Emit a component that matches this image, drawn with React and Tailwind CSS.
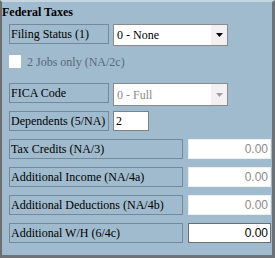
function Label({ children, wide }) {
  return (
    <div
      className={`flex h-[20px] shrink-0 items-center whitespace-nowrap border border-[#74899a] pl-[1px] text-[12px] leading-none text-black ${
        wide ? 'w-[174px]' : 'w-[100px]'
      }`}
    >
      {children}
    </div>
  )
}

function Arrow({ color }) {
  return (
    <svg width="7" height="4" viewBox="0 0 7 4">
      <path d="M0 0h7L3.5 4z" fill={color} />
    </svg>
  )
}

function FakeSelect({ value, disabled, height }) {
  return (
    <div
      className={`ml-[4px] flex w-[115px] shrink-0 border border-[#8a8a8a] bg-white ${height}`}
    >
      <div
        className={`flex flex-1 items-center pl-[3px] text-[12px] ${disabled ? 'text-[#8c8c8c]' : 'text-black'}`}
      >
        {value}
      </div>
      <div className="flex w-[16px] items-center justify-center bg-[#f3f0f3]">
        <Arrow color={disabled ? '#a0a0a0' : '#000'} />
      </div>
    </div>
  )
}

function Amount({ value, active }) {
  return (
    <div
      className={`ml-[5px] flex h-[20px] w-[83px] shrink-0 items-center justify-end bg-white pr-[2px] [font-family:'Liberation_Sans',Arial,sans-serif] text-[12px] ${
        active ? 'border border-[#6e6e6e] text-black' : 'border border-[#eeeeee] text-[#8c8c8c]'
      }`}
    >
      {value}
    </div>
  )
}

export default function App() {
  const amounts = [
    ['Tax Credits (NA/3)', false],
    ['Additional Income (NA/4a)', false],
    ['Additional Deductions (NA/4b)', false],
    ['Additional W/H (6/4c)', true],
  ]

  return (
    <div className="box-border h-[258px] w-[275px] border-b-[3px] border-l-[2px] border-r-[3px] border-t-[2px] border-b-[#6f7377] border-l-[#6e6e6e] border-r-[#6b7378] border-t-[#c3d6e2] bg-[#9fbbcd] [font-family:'Liberation_Serif','Times_New_Roman',serif]">
      <div className="mt-[3px] text-[12px] font-bold leading-[14px] text-black">Federal Taxes</div>

      <div className="mt-[5px] flex flex-col pl-[7px]">
        <div className="flex h-[22px] items-start">
          <Label>Filing Status (1)</Label>
          <FakeSelect value="0 - None" height="h-[22px]" />
        </div>

        <div className="mt-[9px] flex h-[13px] items-center">
          <div className="h-[13px] w-[12px] bg-white" />
          <span className="ml-[6px] text-[12px] text-[#56697d]">2 Jobs only (NA/2c)</span>
        </div>

        <div className="mt-[15px] flex h-[23px] items-start">
          <Label>FICA Code</Label>
          <FakeSelect value="0 - Full" disabled height="h-[23px]" />
        </div>

        <div className="mt-[5px] flex h-[20px] items-start">
          <Label>Dependents (5/NA)</Label>
          <div className="ml-[4px] flex h-[20px] w-[36px] items-center border border-[#808080] bg-white pl-[2px] text-[12px] text-black">
            2
          </div>
        </div>

        {amounts.map(([label, active]) => (
          <div key={label} className="mt-[8px] flex h-[20px] items-start">
            <Label wide>{label}</Label>
            <Amount value="0.00" active={active} />
          </div>
        ))}
      </div>
    </div>
  )
}
